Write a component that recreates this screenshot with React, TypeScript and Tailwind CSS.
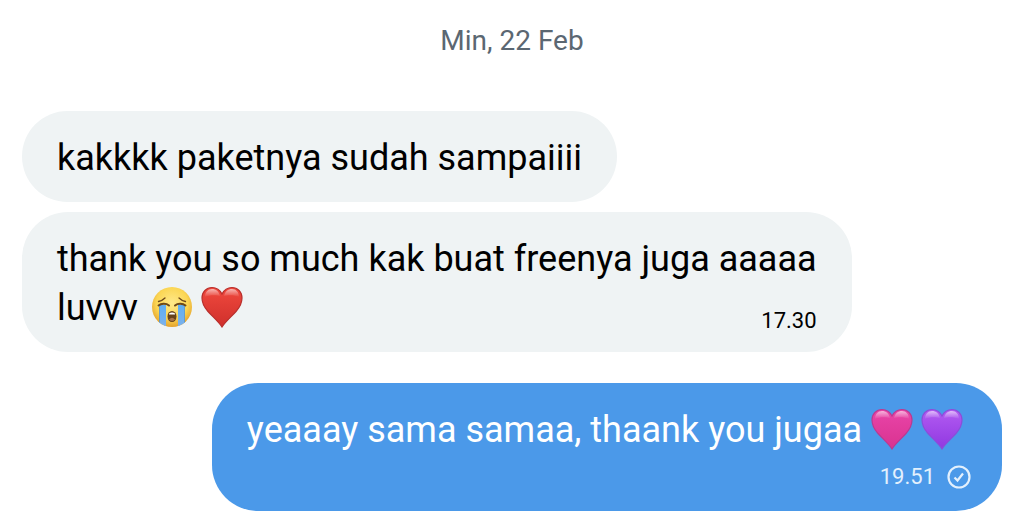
import { useId } from "react";

const Heart: React.FC<{
  label: string;
  top: string;
  bottom: string;
  edge: string;
}> = ({ label, top, bottom, edge }) => {
  const id = useId();
  return (
    <svg role="img" aria-label={label} viewBox="0 0 42 42" className="inline-block size-[42px] shrink-0">
      <defs>
        <linearGradient id={`${id}-fill`} x1="0" y1="0" x2="0" y2="1">
          <stop offset="0" stopColor={top} />
          <stop offset="1" stopColor={bottom} />
        </linearGradient>
        <linearGradient id={`${id}-shine`} x1="0" y1="0" x2="0" y2="1">
          <stop offset="0" stopColor="#fff" stopOpacity="0.6" />
          <stop offset="1" stopColor="#fff" stopOpacity="0" />
        </linearGradient>
      </defs>
      <path
        d="M21 41C18 36 12 31 7 25.500C3 21 1 17 1 12C1 5.500 5.500 1.500 11 1.500C15.500 1.500 19 4 21 8C23 4 26.500 1.500 31 1.500C36.500 1.500 41 5.500 41 12C41 17 39 21 35 25.500C30 31 24 36 21 41Z"
        fill={`url(#${id}-fill)`}
        stroke={edge}
        strokeWidth="1.200"
      />
      <path d="M4 11C4 6 7 3 11 3C15 3 18 5.500 19 10C15 9 8 9 4 11Z" fill={`url(#${id}-shine)`} />
      <path d="M38 11C38 6 35 3 31 3C27 3 24 5.500 23 10C27 9 34 9 38 11Z" fill={`url(#${id}-shine)`} />
    </svg>
  );
};

const CryingFace = () => (
  <svg role="img" aria-label="crying face" viewBox="0 0 42 42" className="inline-block size-[42px] shrink-0">
    <defs>
      <radialGradient id="face" cx="0.5" cy="0.4" r="0.6">
        <stop offset="0" stopColor="#ffe98a" />
        <stop offset="0.65" stopColor="#fbd654" />
        <stop offset="1" stopColor="#e4a22c" />
      </radialGradient>
      <linearGradient id="tears" x1="0" y1="0" x2="0" y2="1">
        <stop offset="0" stopColor="#5faef2" />
        <stop offset="1" stopColor="#7fb2ea" />
      </linearGradient>
      <clipPath id="faceClip">
        <circle cx="21" cy="21" r="20" />
      </clipPath>
    </defs>
    <circle cx="21" cy="21" r="20" fill="url(#face)" />
    <g clipPath="url(#faceClip)">
      <path d="M8.500 19H15V42H8.500Z M27 19H33.500V42H27Z" fill="url(#tears)" />
      <path d="M8.500 19V42 M33.500 19V42" stroke="#4f94d8" strokeWidth="0.8" />
    </g>
    <g fill="none" stroke="#6d4919" strokeLinecap="round">
      <path d="M7.500 15.500C10 15 12.500 13.500 14 12" strokeWidth="1.300" />
      <path d="M34.500 15.500C32 15 29.500 13.500 28 12" strokeWidth="1.300" />
      <path d="M7.500 19.500C10 17.500 15 17 18 19.500" strokeWidth="2" />
      <path d="M34.500 19.500C32 17.500 27 17 24 19.500" strokeWidth="2" />
    </g>
    <ellipse cx="21" cy="30.500" rx="4.500" ry="5.500" fill="#66421b" />
    <path d="M18 27.500Q21 25.500 24 27.500V28.500H18Z" fill="#fff" />
    <path d="M18 33.500Q21 30 24 33.500Q21 36.500 18 33.500Z" fill="#a8744a" />
  </svg>
);

const Bubble: React.FC<{
  children: React.ReactNode;
  className?: string;
}> = ({ children, className }) => (
  <div className={`w-fit rounded-[46px] pt-[23px] text-4xl leading-[49px] ${className}`}>{children}</div>
);

export default function App() {
  return (
    <main className="bg-white px-[22px] pt-5 pb-4 font-[Roboto,sans-serif] text-black">
      <p className="text-center text-[28px] leading-[42px] text-[#5b6772]">Min, 22 Feb</p>

      <div className="mt-[49px] flex flex-col items-start gap-[10px]">
        <Bubble className="bg-[#eff3f4] px-[35px] pb-[19px]">
          <p>kakkkk paketnya sudah sampaiiii</p>
        </Bubble>
        <Bubble className="bg-[#eff3f4] px-[35px] pb-[19px]">
          <p>thank you so much kak buat freenya juga aaaaa</p>
          <div className="flex items-end justify-between">
            <p>
              luvvv{" "}
              <span className="ml-1 inline-flex gap-2 align-[-8px]">
                <CryingFace />
                <Heart label="red heart" top="#f0493e" bottom="#cf2f2b" edge="#b92f2c" />
              </span>
            </p>
            <time className="text-[22px] leading-6">17.30</time>
          </div>
        </Bubble>
      </div>

      <div className="mt-[31px] flex justify-end">
        <Bubble className="bg-[#4b99e9] pr-[31px] pb-[22px] pl-[35px] text-white">
          <p className="pr-2">
            yeaaay sama samaa, thaank you jugaa{" "}
            <span className="inline-flex gap-2 align-[-8px]">
              <Heart label="pink heart" top="#e945a8" bottom="#d93290" edge="#b93a91" />
              <Heart label="purple heart" top="#b25bf2" bottom="#9038e0" edge="#8a4ed8" />
            </span>
          </p>
          <div className="mt-[10px] flex items-center justify-end gap-3 text-[22px] leading-6 text-[#e3f0fd]">
            <time>19.51</time>
            <svg role="img" aria-label="sent" viewBox="0 0 24 24" fill="none" className="size-6">
              <circle cx="12" cy="12" r="10.500" stroke="currentColor" strokeWidth="2.200" />
              <path d="M7.500 12.500L10.500 15.500L16 8.500" stroke="currentColor" strokeWidth="2.200" />
            </svg>
          </div>
        </Bubble>
      </div>
    </main>
  );
}
